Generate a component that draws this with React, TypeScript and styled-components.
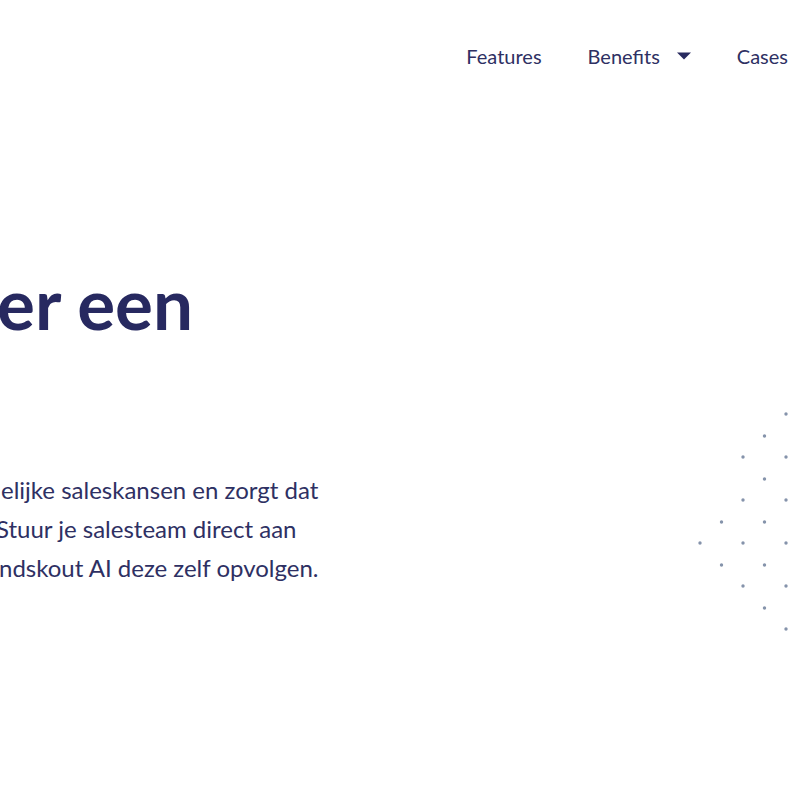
import styled, { createGlobalStyle } from "styled-components";

const GlobalStyle = createGlobalStyle`
  html, body {
    margin: 0;
    padding: 0;
    background: #ffffff;
    overflow: hidden;
  }
  body {
    font-family: Lato, "Noto Sans", sans-serif;
    color: #282a5f;
  }
`;

const Page = styled.div`
  width: 800px;
  height: 800px;
  overflow: hidden;
  display: flex;
  flex-direction: column;
`;

const Header = styled.header`
  height: 112px;
  display: flex;
  justify-content: flex-end;
  align-items: center;
  padding-right: 12px;
`;

const Nav = styled.nav`
  display: flex;
  align-items: center;
  gap: 46px;
`;

const NavItem = styled.a`
  display: flex;
  align-items: center;
  gap: 17px;
  font-size: 20px;
  color: #2e3063;
  text-decoration: none;
  cursor: pointer;
`;

const Hero = styled.section`
  display: flex;
  align-items: flex-start;
`;

const Copy = styled.div`
  display: flex;
  flex-direction: column;
  white-space: nowrap;
`;

const Title = styled.h1`
  margin: 155px 0 0 -3px;
  font-size: 71px;
  line-height: 71px;
  font-weight: 700;
  color: #272960;
`;

const Lead = styled.p`
  margin: 132px 0 0;
  font-size: 24px;
  line-height: 39px;
  color: #2e3063;
  display: flex;
  flex-direction: column;
`;

const Line = styled.span<{ $shift: number }>`
  margin-left: ${(p) => p.$shift}px;
`;

const Pattern = styled.svg`
  margin-left: auto;
  margin-top: 292px;
  flex-shrink: 0;
`;

const Caret = () => (
  <svg width="14" height="8" viewBox="0 0 14 8">
    <path d="M0 0.5 L14 0.5 L7 7.5 Z" fill="#282a5f" />
  </svg>
);

const dots: [number, number][] = [];
const cols: [number, number[]][] = [
  [700, [543]],
  [721.5, [522, 565]],
  [743, [457, 500, 543, 586]],
  [764.5, [436, 479, 522, 565, 608]],
  [786, [414, 457, 500, 543, 586, 629]],
];
cols.forEach(([x, ys]) => ys.forEach((y) => dots.push([x - 690, y - 404])));

export default function App() {
  return (
    <>
      <GlobalStyle />
      <Page>
        <Header>
          <Nav>
            <NavItem>Features</NavItem>
            <NavItem>
              Benefits
              <Caret />
            </NavItem>
            <NavItem>Cases</NavItem>
          </Nav>
        </Header>
        <Hero>
          <Copy>
            <Title>er een</Title>
            <Lead>
              <Line $shift={1}>elijke saleskansen en zorgt dat</Line>
              <Line $shift={-4}>Stuur je salesteam direct aan</Line>
              <Line $shift={-1}>ndskout AI deze zelf opvolgen.</Line>
            </Lead>
          </Copy>
          <Pattern width="110" height="236" viewBox="0 0 110 236">
            {dots.map(([x, y], i) => (
              <circle key={i} cx={x} cy={y} r="1.7" fill="#8593ab" />
            ))}
          </Pattern>
        </Hero>
      </Page>
    </>
  );
}
